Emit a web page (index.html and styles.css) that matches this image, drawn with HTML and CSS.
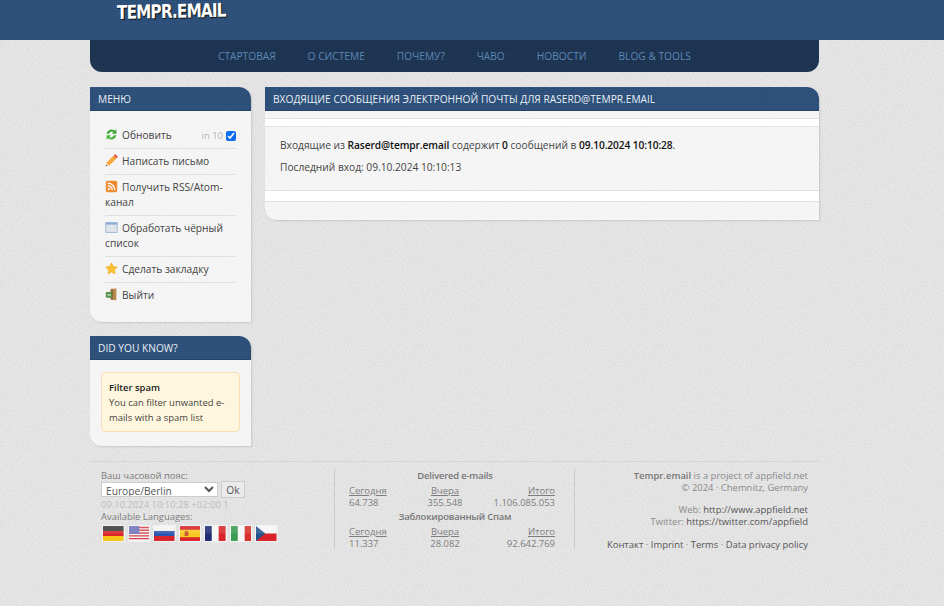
FILE: index.html
```html
<!DOCTYPE html>
<html lang="ru">
<head>
    <meta charset="UTF-8">
    <title>Tempr.email</title>
    <link rel="stylesheet" href="styles.css">
</head>
<body>
    <div class="top">
        <div class="wrap">
            <a class="logo" href="#">TEMPR.EMAIL</a>
        </div>
    </div>
    <div class="wrap">
        <ul class="nav">
            <li><a href="#">СТАРТОВАЯ</a></li>
            <li><a href="#">О СИСТЕМЕ</a></li>
            <li><a href="#">ПОЧЕМУ?</a></li>
            <li><a href="#">ЧАВО</a></li>
            <li><a href="#">НОВОСТИ</a></li>
            <li><a href="#">BLOG &amp; TOOLS</a></li>
        </ul>

        <div class="columns">
            <div class="side">
                <div class="panel">
                    <h2 class="panel-title">МЕНЮ</h2>
                    <ul class="menu">
                        <li class="menu-refresh">
                            <a href="#"><svg class="ico" viewBox="0 0 16 16"><path d="M2 7a6 6 0 0 1 10-3.500L14 1.500V7H8.500l2-2A4 4 0 0 0 5 7z" fill="#3fa535"/><path d="M14 9a6 6 0 0 1-10 3.500L2 14.500V9h5.500l-2 2A4 4 0 0 0 11 9z" fill="#4cb53f"/></svg>Обновить</a>
                            <span class="auto">in 10 <input class="auto-check" type="checkbox" checked></span>
                        </li>
                        <li><a href="#"><svg class="ico" viewBox="0 0 16 16"><path d="M1 15l1-4.500L10.500 2l3.500 3.500L5.500 14z" fill="#f3a73b"/><path d="M10.500 2l1.300-1.300a1 1 0 0 1 1.400 0l2.100 2.100a1 1 0 0 1 0 1.400L14 5.500z" fill="#e2574c"/><path d="M1 15l1-4.500 3.500 3.500z" fill="#f6dcae"/><path d="M1 15l.4-1.800 1.400 1.400z" fill="#444"/></svg>Написать письмо</a></li>
                        <li><a href="#"><svg class="ico" viewBox="0 0 16 16"><rect x="1" y="1" width="14" height="14" rx="2" fill="#ef8a2c"/><circle cx="4.800" cy="11.200" r="1.500" fill="#fff"/><path d="M3.300 7a5.700 5.700 0 0 1 5.700 5.700M3.300 3.800a8.900 8.900 0 0 1 8.900 8.900" fill="none" stroke="#fff" stroke-width="1.700"/></svg>Получить RSS/Atom-канал</a></li>
                        <li><a href="#"><svg class="ico" viewBox="0 0 16 16"><rect x="1" y="2" width="14" height="12" fill="#dfe3ea" stroke="#8fb0d6"/><rect x="1" y="2" width="14" height="2.500" fill="#8fb0d6"/></svg>Обработать чёрный список</a></li>
                        <li><a href="#"><svg class="ico" viewBox="0 0 16 16"><path d="M8 1l2.200 4.500 5 .7-3.600 3.500.8 5L8 12.300l-4.400 2.400.8-5L.8 6.200l5-.7z" fill="#fbc02d" stroke="#ec9a1e" stroke-width=".6"/></svg>Сделать закладку</a></li>
                        <li><a href="#"><svg class="ico" viewBox="0 0 16 16"><path d="M7 1l7-.5V15l-7-.5z" fill="#b98a4e"/><rect x="7" y="2" width="3" height="12" fill="#8a6a3a"/><rect x="1" y="5" width="8" height="7" rx="1" fill="#5a8f4c"/><path d="M3 8.500h4" stroke="#e8f4e0" stroke-width="1.500"/></svg>Выйти</a></li>
                    </ul>
                </div>

                <div class="panel panel-tip">
                    <h2 class="panel-title">DID YOU KNOW?</h2>
                    <div class="tip">
                        <b>Filter spam</b><br>
                        You can filter unwanted e-<br>mails with a spam list
                    </div>
                </div>
            </div>

            <div class="panel main">
                <h2 class="panel-title">ВХОДЯЩИЕ СООБЩЕНИЯ ЭЛЕКТРОННОЙ ПОЧТЫ ДЛЯ RASERD@TEMPR.EMAIL</h2>
                <div class="strip"></div>
                <div class="inbox">
                    <p>Входящие из <b>Raserd@tempr.email</b> содержит <b>0</b> сообщений в <b>09.10.2024 10:10:28</b>.</p>
                    <p>Последний вход: 09.10.2024 10:10:13</p>
                </div>
                <div class="strip strip-low"></div>
            </div>
        </div>

        <div class="footer">
            <div class="foot-lang">
                <div class="tz-label">Ваш часовой пояс:</div>
                <form class="tz">
                    <select class="tz-select"><option>Europe/Berlin</option></select>
                    <button class="tz-ok" type="button">Ok</button>
                </form>
                <div class="tz-time">09.10.2024 10:10:28 +02:00 1</div>
                <div class="lang-label">Available Languages:</div>
                <div class="flags">
                    <svg class="flag" viewBox="0 0 22 16"><rect width="22" height="5.400" fill="#3a3a3a"/><rect y="5.300" width="22" height="5.400" fill="#d8242a"/><rect y="10.700" width="22" height="5.300" fill="#f5c518"/><rect width="22" height="8" fill="#fff" opacity=".12"/></svg>
                    <svg class="flag" viewBox="0 0 22 16"><rect width="22" height="16" fill="#f4f4f4"/><path d="M0 1.500h22M0 4.500h22M0 7.500h22M0 10.500h22M0 13.500h22" stroke="#d6404a" stroke-width="1.500"/><rect width="11" height="8.500" fill="#6f74b8"/><rect width="22" height="8" fill="#fff" opacity=".12"/></svg>
                    <svg class="flag" viewBox="0 0 22 16"><rect width="22" height="5.400" fill="#f4f4f4"/><rect y="5.300" width="22" height="5.400" fill="#2a55b0"/><rect y="10.700" width="22" height="5.300" fill="#d8242a"/><rect width="22" height="8" fill="#fff" opacity=".12"/></svg>
                    <svg class="flag" viewBox="0 0 22 16"><rect width="22" height="16" fill="#d8242a"/><rect y="4" width="22" height="8" fill="#f7c81e"/><rect x="5" y="5.500" width="4" height="5" fill="#c8502a"/><rect width="22" height="8" fill="#fff" opacity=".12"/></svg>
                    <svg class="flag" viewBox="0 0 22 16"><rect width="7.400" height="16" fill="#1f2a70"/><rect x="7.300" width="7.400" height="16" fill="#f6f6f6"/><rect x="14.700" width="7.300" height="16" fill="#d8242a"/><rect width="22" height="8" fill="#fff" opacity=".12"/></svg>
                    <svg class="flag" viewBox="0 0 22 16"><rect width="7.400" height="16" fill="#3a9a50"/><rect x="7.300" width="7.400" height="16" fill="#f6f6f6"/><rect x="14.700" width="7.300" height="16" fill="#d8302a"/><rect width="22" height="8" fill="#fff" opacity=".12"/></svg>
                    <svg class="flag" viewBox="0 0 22 16"><rect width="22" height="8" fill="#f6f6f6"/><rect y="8" width="22" height="8" fill="#d8242a"/><path d="M0 0l10 8-10 8z" fill="#24528f"/><rect width="22" height="8" fill="#fff" opacity=".12"/></svg>
                </div>
            </div>

            <div class="foot-stats">
                <div class="stats-title">Delivered e-mails</div>
                <div class="stats-row">
                    <div class="stat"><u>Сегодня</u><span>64.738</span></div>
                    <div class="stat stat-mid"><u>Вчера</u><span>355.548</span></div>
                    <div class="stat stat-end"><u>Итого</u><span>1.106.085.053</span></div>
                </div>
                <div class="stats-title stats-title-low">Заблокированный Спам</div>
                <div class="stats-row">
                    <div class="stat"><u>Сегодня</u><span>11.337</span></div>
                    <div class="stat stat-mid"><u>Вчера</u><span>28.082</span></div>
                    <div class="stat stat-end"><u>Итого</u><span>92.642.769</span></div>
                </div>
            </div>

            <div class="foot-about">
                <div><b>Tempr.email</b> is a project of appfield.net</div>
                <div>© 2024 · Chemnitz, Germany</div>
                <div class="gap">Web: <a href="#">http://www.appfield.net</a></div>
                <div>Twitter: <a href="#">https://twitter.com/appfield</a></div>
                <div class="gap gap-links"><a href="#">Контакт</a> · <a href="#">Imprint</a> · <a href="#">Terms</a> · <a href="#">Data privacy policy</a></div>
            </div>
        </div>
    </div>
</body>
</html>
```

FILE: styles.css
```css
* {
    margin: 0;
    padding: 0;
    box-sizing: border-box;
}

html, body {
    height: 606px;
    overflow: hidden;
}

body {
    font-family: "Open Sans", "Noto Sans", sans-serif;
    font-size: 10.2px;
    line-height: 15px;
    color: #444;
    background-color: #dfdfdf;
    background-image: url("data:image/svg+xml,%3Csvg xmlns='http://www.w3.org/2000/svg' width='240' height='240'%3E%3Cfilter id='n'%3E%3CfeTurbulence type='fractalNoise' baseFrequency='.7' numOctaves='2'/%3E%3CfeColorMatrix values='0 0 0 0 1 0 0 0 0 1 0 0 0 0 1 .8 0 0 0 -.28'/%3E%3C/filter%3E%3Crect width='240' height='240' filter='url(%23n)'/%3E%3C/svg%3E");
}

a {
    color: inherit;
    text-decoration: none;
}

ul {
    list-style: none;
}

.wrap {
    width: 729px;
    margin-left: 90px;
}

/* top band */
.top {
    height: 40px;
    background-color: #2b4f7a;
    background-image: repeating-linear-gradient(0deg, rgba(255,255,255,.03) 0 1px, transparent 1px 2px), repeating-linear-gradient(90deg, rgba(0,0,0,.04) 0 1px, transparent 1px 2px);
}

.logo {
    display: inline-block;
    margin: 1px 0 0 27px;
    font-family: "DejaVu Sans", sans-serif;
    font-size: 19px;
    line-height: 22px;
    font-weight: bold;
    letter-spacing: -1px;
    color: #fff;
    text-shadow: 1px 1px 1px #111;
    transform: scaleX(.8) rotate(-1deg);
    transform-origin: left center;
}

.nav {
    display: flex;
    gap: 32px;
    height: 32px;
    padding-left: 128px;
    background-color: #1b3350;
    background-image: repeating-linear-gradient(0deg, rgba(255,255,255,.02) 0 1px, transparent 1px 2px);
    border-radius: 0 0 12px 12px;
    line-height: 32px;
    color: #5d86b3;
}

.columns {
    display: flex;
    gap: 14px;
    margin-top: 15px;
}

.side {
    width: 161px;
    flex-shrink: 0;
}

.panel {
    background-color: #f3f3f3;
    background-image: url("data:image/svg+xml,%3Csvg xmlns='http://www.w3.org/2000/svg' width='240' height='240'%3E%3Cfilter id='n'%3E%3CfeTurbulence type='fractalNoise' baseFrequency='.7' numOctaves='2'/%3E%3CfeColorMatrix values='0 0 0 0 1 0 0 0 0 1 0 0 0 0 1 .8 0 0 0 -.28'/%3E%3C/filter%3E%3Crect width='240' height='240' filter='url(%23n)'/%3E%3C/svg%3E");
    border-radius: 0 12px 0 12px;
    box-shadow: 1px 1px 2px rgba(0,0,0,.12);
}

.panel-title {
    height: 24px;
    padding-left: 8px;
    background-color: #2b4f7a;
    background-image: repeating-linear-gradient(0deg, rgba(255,255,255,.03) 0 1px, transparent 1px 2px), repeating-linear-gradient(90deg, rgba(0,0,0,.04) 0 1px, transparent 1px 2px);
    border-bottom: 1px solid #234468;
    border-radius: 0 12px 0 0;
    font-size: 10.2px;
    font-weight: 400;
    line-height: 24px;
    color: #e8eef5;
}

/* menu */
.menu {
    padding: 12px 15px 0;
    height: 211px;
}

.menu li {
    padding: 5px 0;
    border-bottom: 1px solid #e0e0e0;
    color: #444;
}

.menu li:last-child {
    border-bottom: 0;
}

.menu-refresh {
    display: flex;
    justify-content: space-between;
    align-items: center;
}

.ico {
    width: 13px;
    height: 13px;
    margin-right: 4px;
    vertical-align: -2px;
}

.auto {
    display: flex;
    align-items: center;
    gap: 3px;
    color: #b5b5b5;
    font-size: 9.45px;
}

.auto-check {
    width: 10px;
    height: 10px;
    accent-color: #0a6cf0;
}

.panel-tip {
    margin-top: 14px;
    height: 110px;
}

.tip {
    margin: 12px 11px 0;
    padding: 7px;
    height: 60px;
    background-color: #fff7dd;
    border: 1px solid #f8dfba;
    border-radius: 4px;
    color: #444;
    font-size: 9.45px;
}

.tip b {
    font-weight: 600;
    color: #222;
}

/* inbox */
.main {
    flex: 1;
    height: 133px;
}

.strip {
    height: 9px;
    margin-top: 7px;
    background-color: #fff;
    border-top: 1px solid #e2e2e2;
    border-bottom: 1px solid #e2e2e2;
}

.inbox {
    padding: 11px 15px 0;
    height: 63px;
}

.inbox p {
    margin-bottom: 7px;
}

.inbox b {
    font-weight: 600;
    color: #111;
    letter-spacing: -.1px;
}

.strip-low {
    margin-top: 0;
    height: 12px;
}

/* footer */
.footer {
    display: flex;
    margin-top: 15px;
    padding: 6px 0 0 11px;
    border-top: 1px solid #d5d5d5;
    color: #7d7d7d;
    font-size: 9.45px;
    line-height: 14px;
}

.foot-lang {
    width: 233px;
    padding-top: 1px;
}

.tz-label {
    line-height: 13px;
}

.tz {
    display: flex;
    align-items: center;
    gap: 3px;
    margin-top: -1px;
}

.tz-select {
    width: 117px;
    height: 15px;
    font-family: inherit;
    font-size: 10.2px;
    color: #555;
    background-color: #fff;
    border: 1px solid #ccc;
}

.tz-ok {
    width: 24px;
    height: 17px;
    font-family: inherit;
    font-size: 10.2px;
    color: #555;
    background-color: #ebebeb;
    border: 1px solid #ccc;
}

.tz-time {
    margin-top: 1px;
    line-height: 12px;
    color: #bcbcbc;
}

.lang-label {
    line-height: 11px;
}

.flags {
    display: flex;
    gap: 3px;
    margin-top: 3px;
    padding-left: 1px;
}

.flag {
    width: 22.5px;
    height: 17px;
    border: 1px solid #f2f2f2;
}

.foot-stats {
    width: 241px;
    margin-top: 1px;
    padding: 0 19px 0 14px;
    height: 80px;
    border-left: 1px solid #ccc;
    border-right: 1px solid #ccc;
}

.stats-title {
    margin-left: 6px;
    font-weight: 600;
    text-align: center;
    color: #777;
    letter-spacing: -.2px;
}

.stats-title-low {
    margin-top: 2px;
}

.stats-row {
    display: grid;
    grid-template-columns: 71px 50px 1fr;
    margin-top: 2px;
    line-height: 11.5px;
}

.stat {
    display: flex;
    flex-direction: column;
    align-items: flex-start;
}

.stat-mid {
    align-items: center;
}

.stat-end {
    align-items: flex-end;
}

.foot-about {
    flex: 1;
    text-align: right;
    padding: 2px 11px 0 0;
    line-height: 12px;
    color: #8a8a8a;
}

.foot-about b {
    font-weight: 600;
    color: #777;
}

.foot-about a {
    color: #555;
}

.gap {
    margin-top: 10px;
}

.gap-links {
    margin-top: 11px;
}
```
